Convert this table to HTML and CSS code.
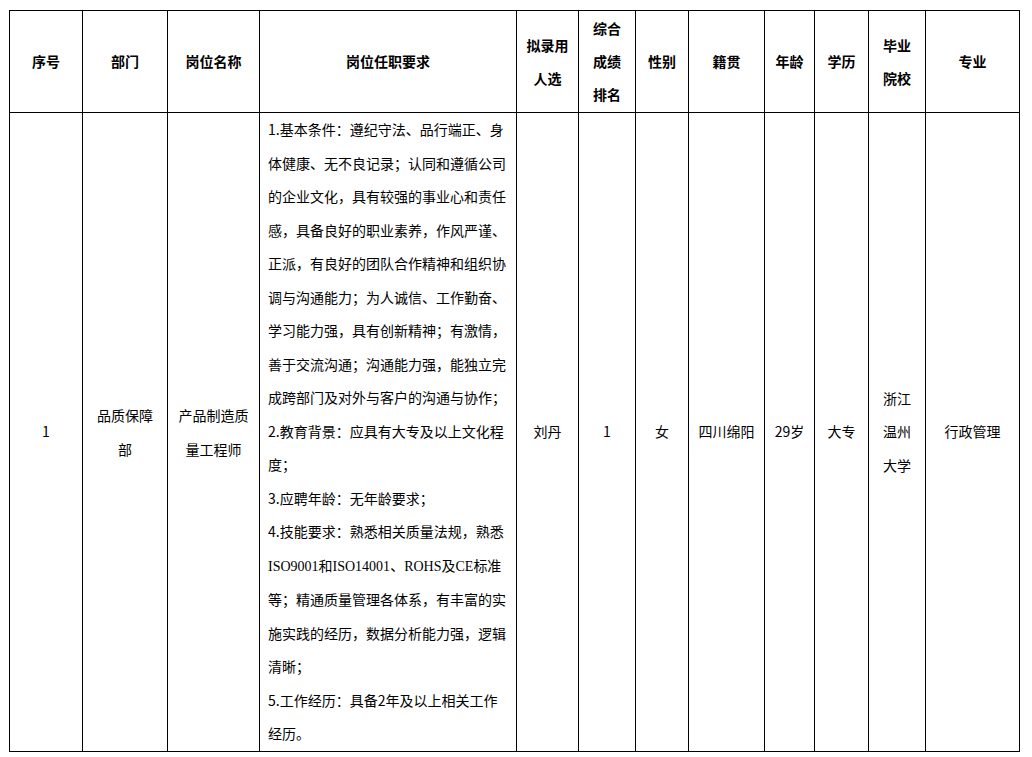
FILE: index.html
```html
<!DOCTYPE html>
<html lang="zh-CN">
<head>
<meta charset="utf-8">
<title>拟录用人员</title>
<link rel="stylesheet" href="styles.css">
</head>
<body>
<div class="page">
<table class="grid">
  <colgroup>
    <col class="c1"><col class="c2"><col class="c3"><col class="c4"><col class="c5"><col class="c6">
    <col class="c7"><col class="c8"><col class="c9"><col class="c10"><col class="c11"><col class="c12">
  </colgroup>
  <thead>
    <tr>
      <th>序号</th>
      <th>部门</th>
      <th>岗位名称</th>
      <th>岗位任职要求</th>
      <th>拟录用<br>人选</th>
      <th>综合<br>成绩<br>排名</th>
      <th>性别</th>
      <th>籍贯</th>
      <th>年龄</th>
      <th>学历</th>
      <th>毕业<br>院校</th>
      <th>专业</th>
    </tr>
  </thead>
  <tbody>
    <tr>
      <td>1</td>
      <td class="tall">品质保障<br>部</td>
      <td class="tall">产品制造质<br>量工程师</td>
      <td class="desc">1.基本条件：遵纪守法、品行端正、身<br>体健康、无不良记录；认同和遵循公司<br>的企业文化，具有较强的事业心和责任<br>感，具备良好的职业素养，作风严谨、<br>正派，有良好的团队合作精神和组织协<br>调与沟通能力；为人诚信、工作勤奋、<br>学习能力强，具有创新精神；有激情，<br>善于交流沟通；沟通能力强，能独立完<br>成跨部门及对外与客户的沟通与协作；<br>2.教育背景：应具有大专及以上文化程<br>度；<br>3.应聘年龄：无年龄要求；<br>4.技能要求：熟悉相关质量法规，熟悉<br><span class="latin">ISO9001</span>和<span class="latin">ISO14001</span>、<span class="latin">ROHS</span>及<span class="latin">CE</span>标准<br>等；精通质量管理各体系，有丰富的实<br>施实践的经历，数据分析能力强，逻辑<br>清晰；<br>5.工作经历：具备2年及以上相关工作<br>经历。</td>
      <td>刘丹</td>
      <td>1</td>
      <td>女</td>
      <td>四川绵阳</td>
      <td>29岁</td>
      <td>大专</td>
      <td>浙江<br>温州<br>大学</td>
      <td>行政管理</td>
    </tr>
  </tbody>
</table>
</div>
</body>
</html>
```

FILE: styles.css
```css
html, body {
  margin: 0;
  padding: 0;
  background: #ffffff;
}

.page {
  padding: 10px 0 0 9px;
}

.grid {
  border-collapse: collapse;
  table-layout: fixed;
  width: 1011px;
  font-family: "Noto Sans CJK SC", "Liberation Sans", sans-serif;
  font-size: 14px;
  color: #000000;
}

.c1 { width: 73px; }
.c2 { width: 85px; }
.c3 { width: 92px; }
.c4 { width: 257px; }
.c5 { width: 62px; }
.c6 { width: 57px; }
.c7 { width: 53px; }
.c8 { width: 76px; }
.c9 { width: 50px; }
.c10 { width: 54px; }
.c11 { width: 57px; }
.c12 { width: 94px; }

.grid th,
.grid td {
  border: 1px solid #000000;
  padding: 0;
  text-align: center;
  vertical-align: middle;
  white-space: nowrap;
}

.grid th {
  height: 101px;
  font-weight: bold;
  line-height: 33px;
}

.grid td {
  height: 638px;
  font-weight: normal;
  line-height: 33.5px;
}

.grid td.tall {
  line-height: 34px;
}

.grid td.desc {
  text-align: left;
  padding: 0 4px 0 8px;
}

.latin {
  font-family: "Liberation Serif", serif;
}
```
